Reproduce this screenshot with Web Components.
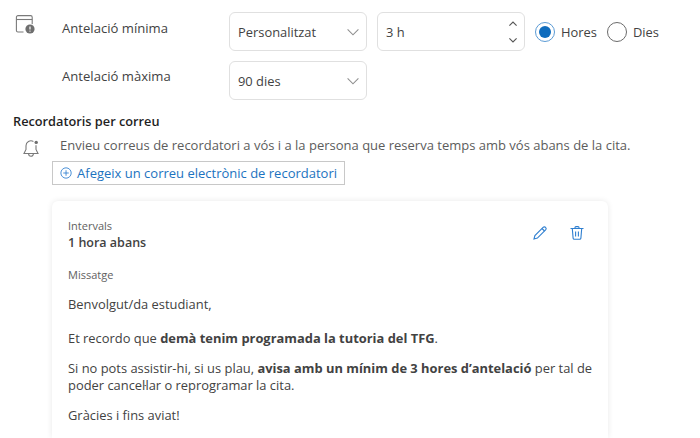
<!DOCTYPE html>
<html lang="ca">
<head>
<meta charset="utf-8">
<title>Recordatoris</title>
<style>
  html, body { margin: 0; background: #fff; }
  body { width: 700px; height: 438px; overflow: hidden; font-family: "Open Sans", "Noto Sans", sans-serif; color: #424242; }
</style>
</head>
<body>
<booking-settings>
  <p>Benvolgut/da estudiant,</p>
  <p class="gap">Et recordo que <b>demà tenim programada la tutoria del TFG</b>.</p>
  <p>Si no pots assistir-hi, si us plau, <b>avisa amb un mínim de 3 hores d’antelació</b> per tal de<br>poder cancel·lar o reprogramar la cita.</p>
  <p>Gràcies i fins aviat!</p>
</booking-settings>

<script>
// small helper so every component gets its open shadow root the same way
function mount(el, html) {
  el.attachShadow({ mode: 'open' }).innerHTML = html
}

const chevron = `<svg width="12" height="12" viewBox="0 0 12 12" fill="none" stroke="#8f8f8f" stroke-width="1.1"><path d="M.6 3.4 6 8.8l5.4-5.4"/></svg>`

class FieldBox extends HTMLElement {
  connectedCallback() {
    const spin = this.hasAttribute('spin')
    mount(this, `
      <style>
        :host { display: flex; align-items: center; justify-content: space-between; box-sizing: border-box;
                width: var(--w, 138px); height: 39px; padding: 0 7px 0 8px; background: #fff;
                border: 1px solid #e0e0e0; border-radius: 6px; font-size: 12.9px; color: #424242; }
        .spin { display: flex; flex-direction: column; gap: 12px; }
        svg { display: block; }
      </style>
      <slot></slot>
      ${spin ? `<div class="spin">
          <svg width="8" height="5" viewBox="0 0 8 5" fill="none" stroke="#555" stroke-width="1.1"><path d="M.4 4.6 4 1l3.6 3.6"/></svg>
          <svg width="8" height="5" viewBox="0 0 8 5" fill="none" stroke="#555" stroke-width="1.1"><path d="M.4.4 4 4 7.6.4"/></svg>
        </div>` : chevron}`)
  }
}
customElements.define('field-box', FieldBox)

class RadioOption extends HTMLElement {
  connectedCallback() {
    const on = this.hasAttribute('checked')
    mount(this, `
      <style>
        :host { display: inline-flex; align-items: center; gap: 6px; font-size: 12.9px; color: #424242; }
        i { box-sizing: border-box; width: 20px; height: 20px; border-radius: 50%; display: flex; align-items: center; justify-content: center;
            border: 1.5px solid ${on ? '#5b9bd5' : '#6b6b6b'}; }
        b { width: 12px; height: 12px; border-radius: 50%; background: #0f6cbd; }
      </style>
      <i>${on ? '<b></b>' : ''}</i><slot></slot>`)
  }
}
customElements.define('radio-option', RadioOption)

class ReminderCard extends HTMLElement {
  connectedCallback() {
    mount(this, `
      <style>
        :host { display: block; box-sizing: border-box; width: 556px; height: 237px; margin: 16px 0 0 52px; padding: 17px 10px 0 16px;
                background: #fff; border-radius: 6px 6px 0 0; box-shadow: 0 0 6px rgba(0,0,0,.09); font-size: 12.9px; line-height: 17px; }
        header { display: flex; justify-content: space-between; align-items: center; }
        .label { font-size: 11px; line-height: 16px; color: #616161; }
        .value { font-size: 12.5px; line-height: 16px; font-weight: 600; color: #424242; margin-top: 1px; }
        .tools { display: flex; gap: 21px; margin-right: 13px; margin-bottom: 3px; }
        svg { display: block; }
        .msg { margin-top: 16px; }
        .body { margin-top: 13px; }
      </style>
      <header>
        <div>
          <div class="label">Intervals</div>
          <div class="value">1 hora abans</div>
        </div>
        <div class="tools">
          <svg width="16" height="16" viewBox="0 0 16 16" fill="none" stroke="#2f7fd0" stroke-width="1.1"><path d="M2 14l.9-3.4 8.2-8.2a1.7 1.7 0 0 1 2.5 2.5l-8.2 8.2z"/><path d="M10 3.5 12.5 6"/></svg>
          <svg width="16" height="16" viewBox="0 0 16 16" fill="none" stroke="#2f7fd0" stroke-width="1.1"><path d="M1.5 3.5h13M6 3.5V2.6a1 1 0 0 1 1-1h2a1 1 0 0 1 1 1v.9M3.3 3.5l.8 9.6a1.3 1.3 0 0 0 1.3 1.2h5.2a1.3 1.3 0 0 0 1.3-1.2l.8-9.6M6.6 6.5v5M9.4 6.5v5"/></svg>
        </div>
      </header>
      <div class="label msg">Missatge</div>
      <div class="body"><slot></slot></div>`)
  }
}
customElements.define('reminder-card', ReminderCard)

class BookingSettings extends HTMLElement {
  connectedCallback() {
    // the paragraphs passed in are moved on to the card's slot
    const card = document.createElement('reminder-card')
    card.append(...this.children)
    card.querySelectorAll('p').forEach(p => {
      p.style.margin = '0 0 13px'
      p.style.color = '#424242'
    })
    card.querySelector('.gap').style.marginTop = '17px'
    mount(this, `
      <style>
        :host { display: block; padding-top: 12px; font-size: 13.1px; color: #424242; }
        .lead { display: grid; grid-template-columns: 62px 167px 138px 158px auto; row-gap: 10px; align-items: start; }
        .ico { padding: 3px 0 0 14px; }
        .lab { line-height: 18px; padding-top: 7px; }
        .spin { --w: 148px; margin-left: 10px; }
        .radios { display: flex; gap: 10px; align-items: center; height: 39px; margin-left: 10px; }
        .second { grid-column: 2; padding-top: 6px; }
        .third { grid-column: 3; }
        h3 { margin: 12px 0 0 13px; font-size: 12.75px; font-weight: 600; color: #1f1f1f; line-height: 18px; }
        .desc { display: flex; margin-top: 7px; height: 24px; }
        .bell { width: 60px; padding: 1px 0 0 21px; box-sizing: border-box; }
        .desc span { line-height: 17px; white-space: nowrap; font-size: 13px; color: #5c5c5c; }
        .add { display: flex; align-items: center; gap: 5px; box-sizing: border-box; height: 24px; width: 293px; margin-left: 52px;
               padding: 0 7px; border: 1px solid #c8c8c8; font-size: 13px; color: #1c73c0; white-space: nowrap; }
        svg { display: block; }
      </style>
      <div class="lead">
        <div class="ico">
          <svg width="22" height="20" viewBox="0 0 22 20" fill="none"><path d="M9.5 17H4a1.6 1.6 0 0 1-1.6-1.6V2.2A1.6 1.6 0 0 1 4 .6h12.6a1.6 1.6 0 0 1 1.6 1.6v7" stroke="#7a7a7a" stroke-width="1.1"/><path d="M2.4 4.5h15.8" stroke="#7a7a7a" stroke-width="1.1"/><circle cx="16" cy="14" r="5.3" fill="#fff"/><circle cx="16" cy="14" r="4.6" fill="#6e6e6e"/><path d="M16 11.6v3" stroke="#fff" stroke-width="1.2"/><circle cx="16" cy="16.1" r=".7" fill="#fff"/></svg>
        </div>
        <div class="lab">Antelació mínima</div>
        <field-box>Personalitzat</field-box>
        <field-box class="spin" spin>3 h</field-box>
        <div class="radios"><radio-option checked>Hores</radio-option><radio-option>Dies</radio-option></div>
        <div class="lab second">Antelació màxima</div>
        <field-box class="third">90 dies</field-box>
      </div>
      <h3>Recordatoris per correu</h3>
      <div class="desc">
        <div class="bell">
          <svg width="20" height="20" viewBox="0 0 20 20" fill="none" stroke="#7a7a7a" stroke-width="1.1"><path d="M12.4 3.4A5 5 0 0 0 5 7.8v3.6l-2 4.1h14l-2-4.1V7.2"/><path d="M7.6 15.8a2.4 2.4 0 0 0 4.8 0"/><circle cx="15.2" cy="4.4" r="1.7" fill="#6e6e6e" stroke="none"/></svg>
        </div>
        <span>Envieu correus de recordatori a vós i a la persona que reserva temps amb vós abans de la cita.</span>
      </div>
      <div class="add">
        <svg width="14" height="14" viewBox="0 0 14 14" fill="none" stroke="#2f7fd0" stroke-width="1"><circle cx="7" cy="7" r="6"/><path d="M7 3.8v6.4M3.8 7h6.4"/></svg>
        Afegeix un correu electrònic de recordatori
      </div>`)
    this.shadowRoot.append(card)
  }
}
customElements.define('booking-settings', BookingSettings)
</script>
</body>
</html>
